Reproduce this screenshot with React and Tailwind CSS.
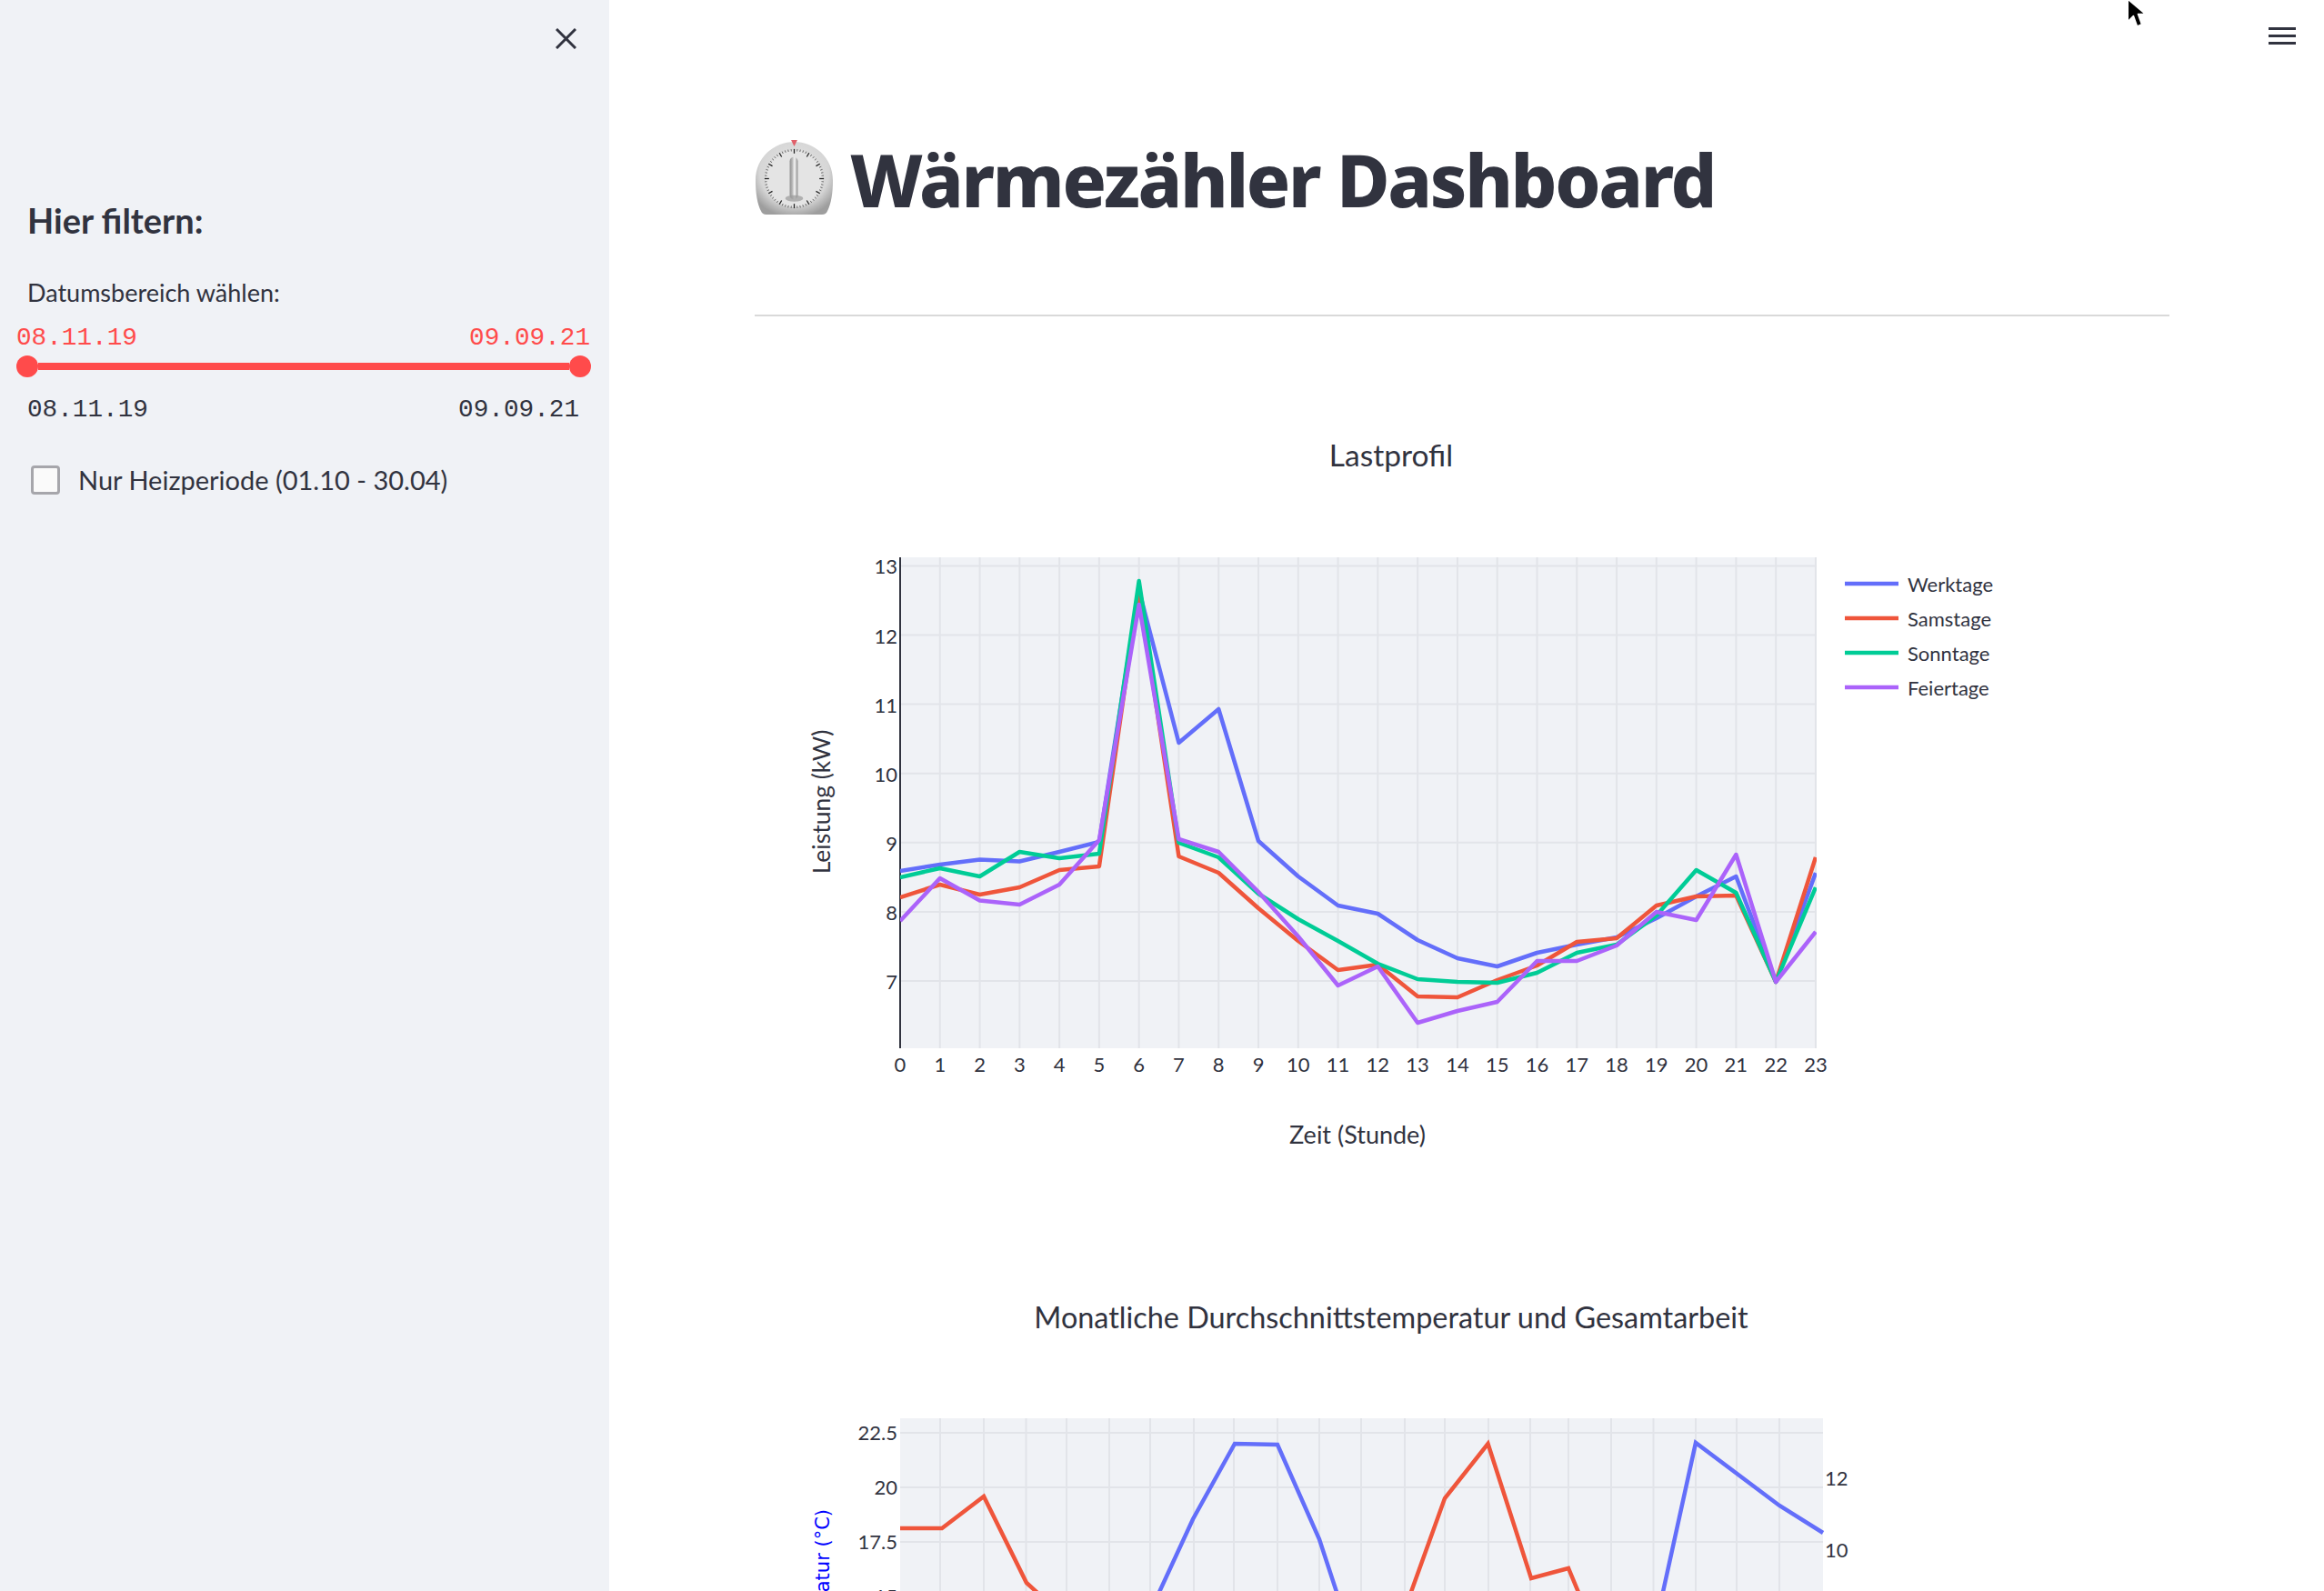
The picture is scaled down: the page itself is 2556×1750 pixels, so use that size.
const blue = [958, 951, 945.5, 947.5, 937, 926, 649, 817, 780, 925, 964, 996, 1005, 1034, 1054, 1063, 1048, 1039, 1031, 1010, 986, 964, 1080, 960];
const red = [987, 973, 984, 976, 957, 953, 649, 942, 960, 999, 1035, 1067, 1061, 1096, 1097, 1078, 1062, 1036, 1032, 996, 986, 985, 1080, 943];
const green = [965, 955, 964, 937, 944, 939, 639, 927, 943, 983, 1011, 1035, 1060, 1077, 1080, 1081, 1070, 1048, 1039, 1007, 957, 982, 1080, 976];
const purple = [1013, 966, 990.5, 995, 973, 924, 665, 923, 937, 981, 1030, 1084, 1063, 1125, 1112, 1102, 1057, 1057, 1040, 1003, 1012, 940, 1080, 1025];

const hourX = (h) => 990 + h * 43.78;
const toPoints = (ys) => ys.map((y, i) => `${hourX(i)},${y}`).join(' ');

const series = [
	{ name: 'Werktage', color: '#636efa', ys: blue },
	{ name: 'Samstage', color: '#ef553b', ys: red },
	{ name: 'Sonntage', color: '#00cc96', ys: green },
	{ name: 'Feiertage', color: '#ab63fa', ys: purple },
];

const monthGrid = [1034, 1082, 1128.5, 1173, 1220, 1265, 1313, 1357, 1405, 1451, 1497, 1545, 1589, 1637, 1683, 1725, 1772, 1818.5, 1865, 1910, 1957];

function LoadChart() {
	const yTicks = [13, 12, 11, 10, 9, 8, 7];
	return (
		<svg viewBox="830 460 1556 820" className="block w-[1556px] h-[820px] shrink-0" fill="#31333f">
			<text x="1530" y="513" fontSize="33.5" textAnchor="middle">Lastprofil</text>
			<rect x="990" y="613" width="1008" height="540" fill="#f0f2f6" />
			{yTicks.map((t) => {
				const y = 1079 - (t - 7) * 76.1;
				return (
					<g key={t}>
						<line x1="990" x2="1998" y1={y} y2={y} stroke="#e2e4e9" strokeWidth="2" />
						<text x="987" y={y + 9} fontSize="22" textAnchor="end">{t}</text>
					</g>
				);
			})}
			{blue.map((_, h) => (
				<g key={h}>
					<line x1={hourX(h)} x2={hourX(h)} y1="613" y2="1153" stroke="#e2e4e9" strokeWidth="2" />
					<text x={hourX(h)} y="1179" fontSize="22" textAnchor="middle">{h}</text>
				</g>
			))}
			<line x1="990" x2="990" y1="613" y2="1153" stroke="#31333f" strokeWidth="2" />
			<svg x="990" y="613" width="1008" height="540" viewBox="990 613 1008 540">
				{series.map((s) => (
					<polyline key={s.name} points={toPoints(s.ys)} fill="none" stroke={s.color} strokeWidth="4.5" strokeLinejoin="round" />
				))}
			</svg>
			{series.map((s, i) => (
				<g key={s.name}>
					<line x1="2029" x2="2088" y1={642 + i * 38} y2={642 + i * 38} stroke={s.color} strokeWidth="4.5" />
					<text x="2098" y={651 + i * 38} fontSize="22">{s.name}</text>
				</g>
			))}
			<text x="906" y="882" fontSize="26.5" textAnchor="middle" transform="rotate(-90 906 882)" dominantBaseline="middle">Leistung (kW)</text>
			<text x="1493" y="1258" fontSize="27" textAnchor="middle">Zeit (Stunde)</text>
		</svg>
	);
}

function MonthChart() {
	return (
		<svg viewBox="830 1420 1556 500" className="block w-[1556px] h-[500px] shrink-0 mt-[141px]" fill="#31333f">
			<text x="1530" y="1460" fontSize="32.4" textAnchor="middle">Monatliche Durchschnittstemperatur und Gesamtarbeit</text>
			<rect x="990" y="1559" width="1015" height="361" fill="#f0f2f6" />
			{monthGrid.map((x) => (
				<line key={x} x1={x} x2={x} y1="1559" y2="1920" stroke="#e2e4e9" strokeWidth="2" />
			))}
			{[['22.5', 1575], ['20', 1635], ['17.5', 1695], ['15', 1755]].map(([label, y]) => (
				<g key={label}>
					<line x1="990" x2="2005" y1={y} y2={y} stroke="#e2e4e9" strokeWidth="2" />
					<text x="987" y={y + 8} fontSize="22" textAnchor="end">{label}</text>
				</g>
			))}
			<polyline points="1252,1800 1312,1670 1358,1587 1405,1588 1451,1692 1470,1750 1480,1800" fill="none" stroke="#636efa" strokeWidth="4.5" />
			<polyline points="1824,1800 1829,1750 1865,1586 1957,1655 2005,1685" fill="none" stroke="#636efa" strokeWidth="4.5" />
			<polyline points="990,1680 1036,1680 1082,1645 1129,1740 1151,1760" fill="none" stroke="#ef553b" strokeWidth="4.5" />
			<polyline points="1545,1790 1552,1750 1589,1647 1636.5,1587 1684,1735 1725,1724 1740,1760" fill="none" stroke="#ef553b" strokeWidth="4.5" />
			<text x="2007" y="1633" fontSize="22">12</text>
			<text x="2007" y="1712" fontSize="22">10</text>
			<text x="906" y="1659" fontSize="21" fill="#0000ff" textAnchor="end" transform="rotate(-90 906 1659)" dominantBaseline="middle" className="[font-family:'DejaVu_Sans',sans-serif]">Temperatur (°C)</text>
		</svg>
	);
}

function TimerEmoji() {
	const ticks = Array.from({ length: 60 }, (_, i) => i);
	return (
		<svg viewBox="0 0 88 88" className="w-[87px] h-[87px] shrink-0">
			<defs>
				<radialGradient id="timerBody" cx="50%" cy="42%" r="62%">
					<stop offset="0%" stopColor="#e6e6e6" />
					<stop offset="72%" stopColor="#d6d6d6" />
					<stop offset="100%" stopColor="#9e9e9e" />
				</radialGradient>
				<linearGradient id="timerKnob" x1="0" x2="1" y1="0" y2="0">
					<stop offset="0%" stopColor="#8f8f8f" />
					<stop offset="35%" stopColor="#bdbdbd" />
					<stop offset="60%" stopColor="#f6f6f6" />
					<stop offset="100%" stopColor="#8a8a8a" />
				</linearGradient>
				<filter id="timerBlur">
					<feGaussianBlur stdDeviation="0.8" />
				</filter>
			</defs>
			<path d="M44 3C66 3 87 20 87 46C87 60 85 72 81 80C80 83 78 84 75 84H13C10 84 8 83 7 80C3 72 1 60 1 46C1 20 22 3 44 3Z" fill="url(#timerBody)" />
			<path d="M40.5 1H47.5L44 8Z" fill="#e0606a" />
			<circle cx="44" cy="44" r="32" fill="#e4e4e4" />
			{ticks.map((i) => (
				<line
					key={i}
					x1="44"
					x2="44"
					y1="11"
					y2={i % 5 === 0 ? 16 : 13.5}
					stroke={i % 5 === 0 ? '#222' : '#555'}
					strokeWidth={i % 5 === 0 ? 1.3 : 0.8}
					transform={`rotate(${i * 6} 44 44)`}
				/>
			))}
			<g filter="url(#timerBlur)">
				<rect x="39" y="20" width="9" height="47" rx="4.5" fill="url(#timerKnob)" />
				<ellipse cx="44" cy="66" rx="10" ry="3.5" fill="#9a9a9a" opacity="0.7" />
			</g>
		</svg>
	);
}

export default function App() {
	return (
		<div className="relative flex h-[1750px] overflow-hidden bg-white text-[#31333f] [font-family:Lato,sans-serif]">
			<aside className="w-[670px] h-full shrink-0 bg-[#f0f2f6]">
				<div className="flex justify-end pt-[31px] pr-[36px]">
					<svg viewBox="0 0 23 23" className="w-[23px] h-[23px]" fill="none" stroke="#31333f" strokeWidth="3">
						<path d="M1 1L22 22M22 1L1 22" />
					</svg>
				</div>
				<h2 className="mt-[164px] ml-[30px] text-[38px] leading-[48px] font-bold">Hier filtern:</h2>
				<div className="mt-[38px] ml-[30px] text-[27px] leading-[36px]">Datumsbereich wählen:</div>
				<div className="mt-[15px] pl-[18px] pr-[21px] flex justify-between text-[27.7px] leading-[34px] text-[#ff4b4b] [font-family:'Liberation_Mono',monospace]">
					<span>08.11.19</span>
					<span>09.09.21</span>
				</div>
				<div className="mt-[2px] ml-[18px] w-[632px] flex items-center">
					<div className="w-[24px] h-[24px] rounded-full bg-[#ff4b4b]" />
					<div className="flex-1 h-[8px] bg-[#ff4b4b]" />
					<div className="w-[24px] h-[24px] rounded-full bg-[#ff4b4b]" />
				</div>
				<div className="mt-[19px] pl-[30px] pr-[33px] flex justify-between text-[27.7px] leading-[34px] [font-family:'Liberation_Mono',monospace]">
					<span>08.11.19</span>
					<span>09.09.21</span>
				</div>
				<div className="mt-[44px] ml-[34px] flex items-center gap-[20px]">
					<div className="w-[32px] h-[32px] rounded-[4px] border-[3px] border-[#a6a6ab] bg-[#fafafa]" />
					<span className="text-[29px] leading-[32px]">Nur Heizperiode (01.10 - 30.04)</span>
				</div>
			</aside>
			<main className="flex-1 min-w-0 pl-[160px] pr-[170px]">
				<div className="pt-[153px] flex items-center gap-[18px]">
					<TimerEmoji />
					<h1 className="text-[80px] leading-[87px] font-extrabold tracking-[-2.3px] whitespace-nowrap [font-family:'Noto_Sans',sans-serif]">Wärmezähler Dashboard</h1>
				</div>
				<hr className="mt-[106px] h-[2px] border-0 bg-[#d9d9d9]" />
				<div className="mt-[112px]">
					<LoadChart />
					<MonthChart />
				</div>
			</main>
			<svg viewBox="0 0 24 34" className="absolute left-[2338px] top-[-3px] w-[25px] h-[35px]">
				<path d="M2 2V26L8 20L12 31L17 29L13 18H21Z" fill="#000" stroke="#fff" strokeWidth="1.6" strokeLinejoin="round" />
			</svg>
			<div className="absolute left-[2495px] top-[30px] w-[30px] flex flex-col gap-[5px]">
				<div className="h-[3px] bg-[#31333f]" />
				<div className="h-[3px] bg-[#31333f]" />
				<div className="h-[3px] bg-[#31333f]" />
			</div>
		</div>
	);
}
